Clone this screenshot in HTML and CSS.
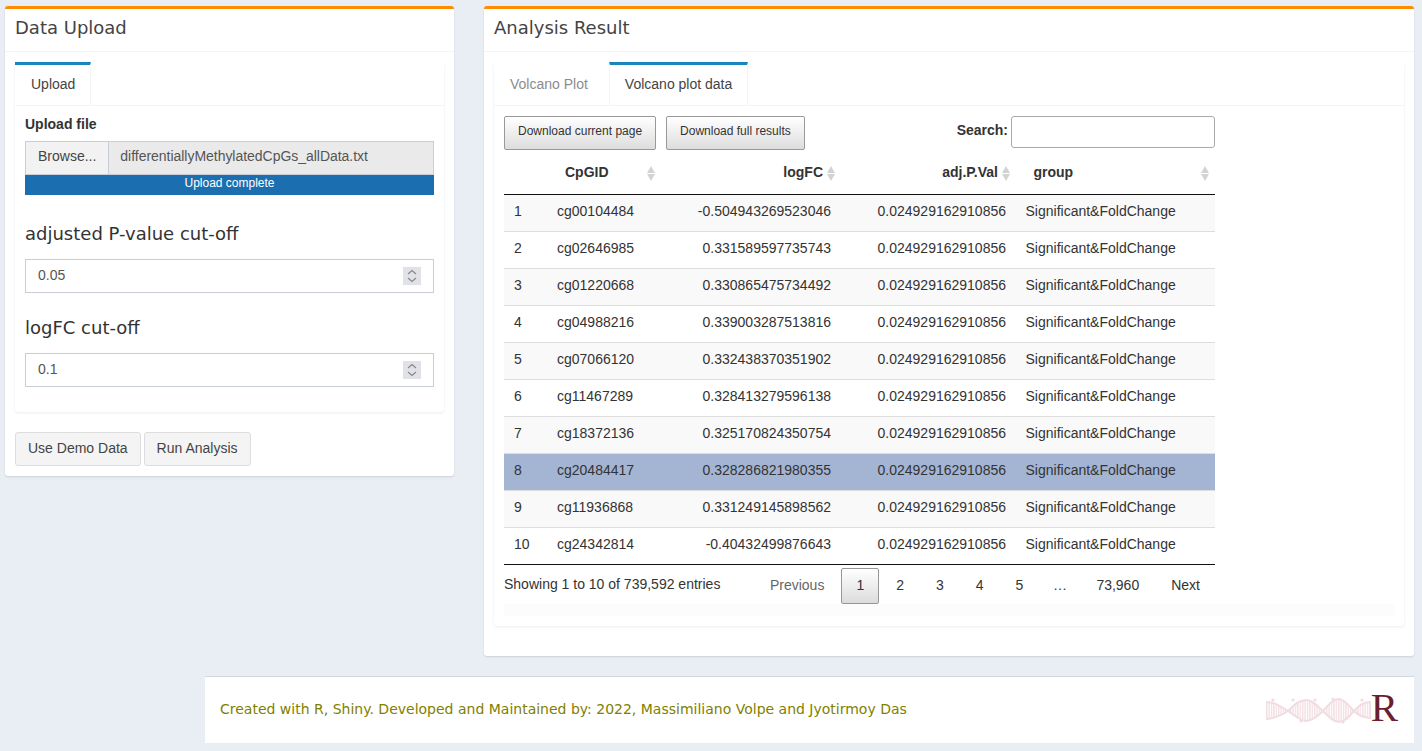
FILE: index.html
```html
<!DOCTYPE html>
<html lang="en">
<head>
    <meta charset="UTF-8">
    <title>Volcano Plot</title>
    <link rel="stylesheet" href="styles.css">
</head>
<body>

<div class="content">
    <!-- Left column -->
    <section class="box box-left">
        <div class="box-header">Data Upload</div>
        <div class="box-body">
            <div class="tab-box">
                <div class="tabs">
                    <a class="tab active">Upload</a>
                </div>
                <div class="tab-pane upload-pane">
                    <div class="file-label">Upload file</div>
                    <div class="file-group">
                        <span class="browse">Browse...</span>
                        <span class="file-name">differentiallyMethylatedCpGs_allData.txt</span>
                    </div>
                    <div class="progress">Upload complete</div>

                    <label class="big-label first">adjusted P-value cut-off</label>
                    <div class="num-wrap">
                        <input class="num-input" type="number" value="0.05" step="0.01">
                        <svg class="spinner" width="18" height="18" viewBox="0 0 18 18">
                            <rect width="18" height="18" fill="#e1e1e8"></rect>
                            <path d="M5 7 L9 3.5 L13 7 M5 11 L9 14.5 L13 11" fill="none" stroke="#85858c" stroke-width="1.1"></path>
                        </svg>
                    </div>

                    <label class="big-label">logFC cut-off</label>
                    <div class="num-wrap">
                        <input class="num-input" type="number" value="0.1" step="0.1">
                        <svg class="spinner" width="18" height="18" viewBox="0 0 18 18">
                            <rect width="18" height="18" fill="#e1e1e8"></rect>
                            <path d="M5 7 L9 3.5 L13 7 M5 11 L9 14.5 L13 11" fill="none" stroke="#85858c" stroke-width="1.1"></path>
                        </svg>
                    </div>
                </div>
            </div>
            <div class="action-row">
                <button class="btn">Use Demo Data</button>
                <button class="btn">Run Analysis</button>
            </div>
        </div>
    </section>

    <!-- Right column -->
    <section class="box box-right">
        <div class="box-header">Analysis Result</div>
        <div class="box-body">
            <div class="tab-box">
                <div class="tabs">
                    <a class="tab">Volcano Plot</a>
                    <a class="tab active">Volcano plot data</a>
                </div>
                <div class="tab-pane data-pane">
                    <div class="dt-wrap">
                        <div class="dt-top">
                            <button class="dt-btn">Download current page</button>
                            <button class="dt-btn">Download full results</button>
                            <label class="dt-search">Search:<input type="text"></label>
                        </div>
                        <table class="dt">
                            <colgroup>
                                <col class="c-id">
                                <col class="c-cpg">
                                <col class="c-fc">
                                <col class="c-pval">
                                <col class="c-group">
                            </colgroup>
                            <thead>
                                <tr>
                                    <th></th>
                                    <th class="sort">CpGID</th>
                                    <th class="sort num">logFC</th>
                                    <th class="sort num">adj.P.Val</th>
                                    <th class="sort">group</th>
                                </tr>
                            </thead>
                            <tbody>
                                <tr><td>1</td><td>cg00104484</td><td class="num">-0.504943269523046</td><td class="num">0.024929162910856</td><td>Significant&amp;FoldChange</td></tr>
                                <tr><td>2</td><td>cg02646985</td><td class="num">0.331589597735743</td><td class="num">0.024929162910856</td><td>Significant&amp;FoldChange</td></tr>
                                <tr><td>3</td><td>cg01220668</td><td class="num">0.330865475734492</td><td class="num">0.024929162910856</td><td>Significant&amp;FoldChange</td></tr>
                                <tr><td>4</td><td>cg04988216</td><td class="num">0.339003287513816</td><td class="num">0.024929162910856</td><td>Significant&amp;FoldChange</td></tr>
                                <tr><td>5</td><td>cg07066120</td><td class="num">0.332438370351902</td><td class="num">0.024929162910856</td><td>Significant&amp;FoldChange</td></tr>
                                <tr><td>6</td><td>cg11467289</td><td class="num">0.328413279596138</td><td class="num">0.024929162910856</td><td>Significant&amp;FoldChange</td></tr>
                                <tr><td>7</td><td>cg18372136</td><td class="num">0.325170824350754</td><td class="num">0.024929162910856</td><td>Significant&amp;FoldChange</td></tr>
                                <tr class="selected"><td>8</td><td>cg20484417</td><td class="num">0.328286821980355</td><td class="num">0.024929162910856</td><td>Significant&amp;FoldChange</td></tr>
                                <tr><td>9</td><td>cg11936868</td><td class="num">0.331249145898562</td><td class="num">0.024929162910856</td><td>Significant&amp;FoldChange</td></tr>
                                <tr><td>10</td><td>cg24342814</td><td class="num">-0.40432499876643</td><td class="num">0.024929162910856</td><td>Significant&amp;FoldChange</td></tr>
                            </tbody>
                        </table>
                        <div class="dt-bottom">
                            <div class="dt-info">Showing 1 to 10 of 739,592 entries</div>
                            <div class="pager">
                                <a class="page prev">Previous</a>
                                <a class="page current">1</a>
                                <a class="page">2</a>
                                <a class="page">3</a>
                                <a class="page">4</a>
                                <a class="page">5</a>
                                <span class="page gap">…</span>
                                <a class="page">73,960</a>
                                <a class="page">Next</a>
                            </div>
                        </div>
                    </div>
                    <div class="pane-fade"></div>
                </div>
            </div>
        </div>
    </section>
</div>

<footer class="footer">
    <span class="footer-text">Created with R, Shiny. Developed and Maintained by: 2022, Massimiliano Volpe and Jyotirmoy Das</span>
    <div class="logo">
        <svg class="dna" width="105" height="27" viewBox="0 0 105 27">
            <defs>
                <pattern id="rungs" width="2.4" height="27" patternUnits="userSpaceOnUse">
                    <rect width="1.4" height="27" fill="#f3e0e4"></rect>
                </pattern>
            </defs>
            <path d="M0 5 C8 5 14 9 22 14 C30 5 36 3 40 3 C46 3 50 8 57 14 C64 6 68 2 73 2 C78 2 82 8 88 14 C92 9 98 5 105 5 L105 21 C98 21 92 18 88 14 C82 21 78 25 73 25 C68 25 64 21 57 14 C50 20 46 24 40 24 C36 24 30 20 22 14 C14 19 8 22 0 22 Z" fill="url(#rungs)" stroke="#f1dde1" stroke-width="2"></path>
            <g fill="#f1dde1">
                <circle cx="7" cy="3" r="1.6"></circle>
                <circle cx="27" cy="3" r="1.6"></circle>
                <circle cx="49" cy="3" r="1.6"></circle>
                <circle cx="67" cy="2" r="1.6"></circle>
                <circle cx="96" cy="3" r="1.6"></circle>
                <circle cx="35" cy="24" r="1.6"></circle>
                <circle cx="77" cy="25" r="1.6"></circle>
            </g>
        </svg>
        <span class="logo-r">R</span>
    </div>
</footer>

</body>
</html>
```

FILE: styles.css
```css
body {
    margin: 0;
    padding: 0;
    background-color: #e9edf4;
    font-family: "Liberation Sans", Arial, sans-serif;
    font-size: 14px;
    color: #333;
}

.content {
    display: flex;
    align-items: flex-start;
    gap: 30px;
    padding: 6px 8px 0 5px;
}

/* Boxes */
.box {
    background-color: #fff;
    border-top: 3px solid #ff8c00;
    border-radius: 3px;
    box-shadow: 0 1px 2px rgba(0, 0, 0, 0.12);
}
.box-left {
    width: 449px;
    height: 467px;
    flex: none;
}
.box-right {
    width: 930px;
    height: 647px;
    flex: none;
}
.box-header {
    height: 42px;
    line-height: 37px;
    padding: 0 10px;
    border-bottom: 1px solid #f4f4f4;
    font-family: "DejaVu Sans", Verdana, sans-serif;
    font-size: 18px;
    color: #444;
}
.box-body {
    padding: 10px;
}

/* Tabs */
.tab-box {
    background-color: #fff;
    border-radius: 3px;
    box-shadow: 0 1px 3px rgba(0, 0, 0, 0.08);
}
.tabs {
    display: flex;
    height: 43px;
    border-bottom: 1px solid #f4f4f4;
}
.tab {
    height: 40px;
    line-height: 38px;
    padding: 0 16px;
    border-top: 3px solid transparent;
    color: #8c8c8c;
}
.tab.active {
    border-top-color: #1a85bd;
    border-right: 1px solid #f4f4f4;
    height: 41px;
    color: #444;
}
.box-left .tab.active {
    padding-right: 15px;
}
.box-right .tab {
    margin-right: 5px;
}
.box-right .tab.active {
    border-left: 1px solid #f4f4f4;
    padding: 0 15px;
    margin-right: 0;
}
.tab-pane {
    padding: 10px;
}
.upload-pane {
    height: 286px;
}
.data-pane {
    height: 500px;
}

/* File input */
.file-label {
    font-weight: bold;
    line-height: 16px;
    margin: 0 0 9px;
    color: #333;
}
.file-group {
    display: flex;
    height: 34px;
    box-sizing: border-box;
    border: 1px solid #c8cdd8;
    line-height: 29px;
}
.browse {
    padding: 0 12px;
    background-color: #f2f2f2;
    border-right: 1px solid #c8cdd8;
    color: #444;
}
.file-name {
    flex: 1;
    padding: 0 12px 0 11px;
    background-color: #eaeaea;
    color: #555;
    letter-spacing: -0.03px;
}
.progress {
    height: 20px;
    line-height: 16px;
    background-color: #1b6fb0;
    color: #fff;
    font-size: 12px;
    text-align: center;
}

.big-label {
    display: block;
    font-family: "DejaVu Sans", Verdana, sans-serif;
    font-size: 18px;
    line-height: 21px;
    margin: 24px 0 15px;
    color: #333;
}
.big-label.first {
    margin-top: 28px;
}
.num-wrap {
    position: relative;
}
.num-input {
    display: block;
    box-sizing: border-box;
    width: 100%;
    height: 34px;
    padding: 5px 12px 7px;
    border: 1px solid #c8cdd8;
    font-family: inherit;
    font-size: 14px;
    color: #555;
    outline: none;
}
.num-input::-webkit-inner-spin-button {
    display: none;
}
.spinner {
    position: absolute;
    top: 8px;
    right: 13px;
}

/* Buttons under the upload box */
.action-row {
    display: flex;
    gap: 3px;
    margin-top: 20px;
}
.btn {
    height: 34px;
    padding: 0 12px 2px;
    background-color: #f4f4f4;
    border: 1px solid #ddd;
    border-radius: 3px;
    font-family: inherit;
    font-size: 14px;
    color: #444;
}

/* Data table */
.dt-wrap {
    width: 711px;
}
.dt-top {
    display: flex;
    align-items: flex-start;
    height: 34px;
}
.dt-btn {
    height: 34px;
    margin-right: 10px;
    padding: 0 13px 4px;
    background: linear-gradient(to bottom, #fff 0%, #ddd 100%);
    border: 1px solid #999;
    border-radius: 2px;
    font-family: inherit;
    font-size: 12px;
    color: #333;
}
.dt-search {
    display: flex;
    align-items: flex-start;
    margin-left: auto;
    font-weight: bold;
    line-height: 28px;
}
.dt-search input {
    width: 204px;
    height: 32px;
    box-sizing: border-box;
    margin-left: 3px;
    border: 1px solid #aaa;
    border-radius: 3px;
    outline: none;
}
.dt {
    width: 100%;
    table-layout: fixed;
    border-collapse: collapse;
    border-bottom: 1px solid #111;
}
.c-id { width: 43px; }
.c-cpg { width: 114px; }
.c-fc { width: 180px; }
.c-pval { width: 175px; }
.dt th {
    position: relative;
    height: 44px;
    padding: 0 18px;
    border-bottom: 1px solid #111;
    text-align: left;
    font-weight: bold;
    box-sizing: border-box;
}
.dt th.num {
    text-align: right;
}
.dt th:last-child {
    padding-left: 17.5px;
}
.dt td {
    height: 37px;
    padding: 0 10px 4px;
    border-top: 1px solid #ddd;
    box-sizing: border-box;
    white-space: nowrap;
}
.dt td:last-child {
    padding-left: 9.5px;
}
.dt tr:first-child td {
    border-top: none;
}
.dt tbody tr:nth-child(odd) {
    background-color: #f9f9f9;
}
.dt tbody tr.selected {
    background-color: #a4b5d4;
}
.dt td.num {
    text-align: right;
}

/* Sort arrows */
.sort::before,
.sort::after {
    content: "";
    position: absolute;
    right: 6px;
    border-left: 4px solid transparent;
    border-right: 4px solid transparent;
}
.sort::before {
    top: 16px;
    border-bottom: 7px solid #d3d3d3;
}
.sort::after {
    top: 24px;
    border-top: 7px solid #d3d3d3;
}

/* Info and pager */
.dt-bottom {
    display: flex;
    justify-content: space-between;
    align-items: flex-start;
    padding-top: 3px;
}
.dt-info {
    padding-top: 8px;
    line-height: 16px;
}
.pager {
    display: flex;
    align-items: center;
    height: 36px;
}
.page {
    box-sizing: border-box;
    min-width: 37px;
    height: 36px;
    line-height: 32px;
    padding: 0 14px;
    margin-left: 2px;
    border: 1px solid transparent;
    border-radius: 2px;
    text-align: center;
    color: #333;
}
.page.prev {
    color: #666;
}
.page.current {
    background: linear-gradient(to bottom, #fff 0%, #dcdcdc 100%);
    border-color: #979797;
}
.page.gap {
    min-width: 0;
    padding: 0 11.5px;
}
.pane-fade {
    height: 12px;
    background-color: #fcfcfc;
}

/* Footer */
.footer {
    display: flex;
    justify-content: space-between;
    align-items: center;
    box-sizing: border-box;
    width: 1209px;
    height: 67px;
    margin: 20px 0 0 205px;
    padding: 0 16px 0 15px;
    background-color: #fff;
    border-top: 1px solid #d2d6de;
}
.footer-text {
    font-family: "DejaVu Sans", Verdana, sans-serif;
    font-size: 14px;
    color: #808000;
    padding-bottom: 2px;
}
.logo {
    display: flex;
    align-items: center;
}
.logo-r {
    font-family: "Liberation Serif", serif;
    font-size: 41px;
    line-height: 40px;
    padding-bottom: 6px;
    color: #6b1f2e;
}
```
